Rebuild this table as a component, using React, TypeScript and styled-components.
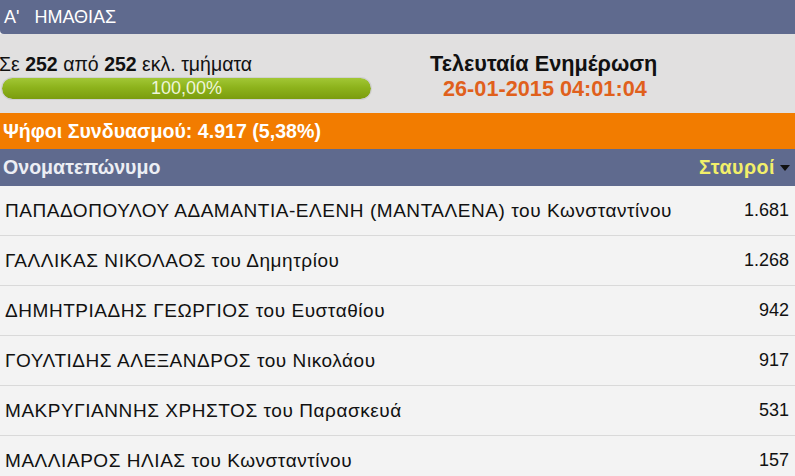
import styled, { createGlobalStyle } from 'styled-components'

const GlobalStyle = createGlobalStyle`
  html, body {
    margin: 0;
    padding: 0;
    background: #f3f3f3;
    font-family: 'Liberation Sans', Arial, sans-serif;
    overflow: hidden;
  }
`

const candidates = [
  { name: 'ΠΑΠΑΔΟΠΟΥΛΟΥ ΑΔΑΜΑΝΤΙΑ-ΕΛΕΝΗ (ΜΑΝΤΑΛΕΝΑ) του Κωνσταντίνου', votes: '1.681' },
  { name: 'ΓΑΛΛΙΚΑΣ ΝΙΚΟΛΑΟΣ του Δημητρίου', votes: '1.268' },
  { name: 'ΔΗΜΗΤΡΙΑΔΗΣ ΓΕΩΡΓΙΟΣ του Ευσταθίου', votes: '942' },
  { name: 'ΓΟΥΛΤΙΔΗΣ ΑΛΕΞΑΝΔΡΟΣ του Νικολάου', votes: '917' },
  { name: 'ΜΑΚΡΥΓΙΑΝΝΗΣ ΧΡΗΣΤΟΣ του Παρασκευά', votes: '531' },
  { name: 'ΜΑΛΛΙΑΡΟΣ ΗΛΙΑΣ του Κωνσταντίνου', votes: '157' },
]

const Page = styled.div`
  width: 795px;
`

const TopBar = styled.div`
  height: 34px;
  background: #5f6a8e;
  color: #fff;
  font-size: 18px;
  display: flex;
  align-items: center;
  padding-left: 4px;
  border-bottom-left-radius: 4px;
  white-space: pre;
`

const Summary = styled.div`
  height: 79px;
  background: #e1e0e0;
  display: grid;
  grid-template-columns: 430px 1fr;
  align-items: start;
`

const Counted = styled.div`
  padding-top: 19px;
  font-size: 19.5px;
  line-height: 22px;
  color: #111;
  margin-left: -1px;
  white-space: nowrap;

  b {
    font-weight: bold;
  }
`

const ProgressTrack = styled.div`
  margin-top: 3px;
  margin-left: 2px;
  width: 369px;
  height: 21px;
  border-radius: 11px;
  background: #c8c8c8;
  box-shadow: 0 0 0 1px #d0d0d0;
  overflow: hidden;
`

const ProgressFill = styled.div`
  height: 100%;
  border-radius: 11px;
  background: linear-gradient(#a2c735 0%, #8db31c 45%, #7b9c0e 100%);
  color: #eef5d8;
  font-size: 18px;
  line-height: 21px;
  text-align: center;
`

const Update = styled.div`
  padding-top: 18px;
  display: flex;
  flex-direction: column;
  align-items: flex-start;
`

const UpdateTitle = styled.div`
  font-size: 21.7px;
  line-height: 24px;
  font-weight: bold;
  color: #111;
`

const UpdateDate = styled.div`
  font-size: 21.7px;
  line-height: 24px;
  font-weight: bold;
  color: #e0601c;
  margin: 1px 0 0 13px;
`

const PartyBar = styled.div`
  height: 36px;
  background: #f27c00;
  color: #fff;
  font-size: 19.6px;
  font-weight: bold;
  display: flex;
  align-items: center;
  padding-left: 3px;
`

const HeaderRow = styled.div`
  height: 37px;
  background: #5f6a8e;
  display: flex;
  align-items: center;
  justify-content: space-between;
  padding: 0 5px 0 3px;
  font-size: 19.6px;
  font-weight: bold;
`

const HeaderName = styled.span`
  color: #eceef4;
`

const SortHeader = styled.span`
  color: #f2ef6a;
  display: flex;
  align-items: center;
  gap: 5px;
  letter-spacing: 0.5px;
`

const SortArrow = styled.span`
  width: 0;
  height: 0;
  border-left: 5px solid transparent;
  border-right: 5px solid transparent;
  border-top: 6px solid #111;
  margin-top: 1px;
`

const Row = styled.div`
  height: 49px;
  border-bottom: 1px solid #d9d9d9;
  background: #f3f3f3;
  display: flex;
  align-items: center;
  justify-content: space-between;
  padding: 0 6px 0 5px;
  color: #111;
`

const Name = styled.span`
  font-size: 19px;
  letter-spacing: 0.55px;
`

const Votes = styled.span`
  font-size: 18px;
`

export default function App() {
  return (
    <Page>
      <GlobalStyle />
      <TopBar>Α'   ΗΜΑΘΙΑΣ</TopBar>
      <Summary>
        <div>
          <Counted>
            Σε <b>252</b> από <b>252</b> εκλ. τμήματα
          </Counted>
          <ProgressTrack>
            <ProgressFill>100,00%</ProgressFill>
          </ProgressTrack>
        </div>
        <Update>
          <UpdateTitle>Τελευταία Ενημέρωση</UpdateTitle>
          <UpdateDate>26-01-2015 04:01:04</UpdateDate>
        </Update>
      </Summary>
      <PartyBar>Ψήφοι Συνδυασμού: 4.917 (5,38%)</PartyBar>
      <HeaderRow>
        <HeaderName>Ονοματεπώνυμο</HeaderName>
        <SortHeader>
          Σταυροί
          <SortArrow />
        </SortHeader>
      </HeaderRow>
      {candidates.map((c) => (
        <Row key={c.name}>
          <Name>{c.name}</Name>
          <Votes>{c.votes}</Votes>
        </Row>
      ))}
    </Page>
  )
}
